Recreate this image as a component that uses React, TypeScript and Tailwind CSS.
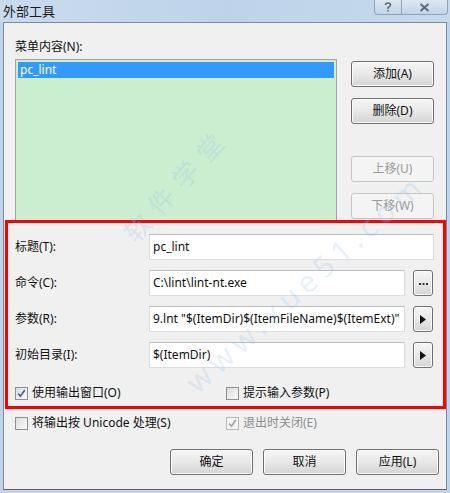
import React from "react";

const font = { fontFamily: '"Noto Sans", "Noto Sans CJK SC", sans-serif' };

function Btn({ label, disabled, className = "" }: { label: string; disabled?: boolean; className?: string }) {
  return (
    <div
      className={
        "flex h-[26px] w-[83px] items-center justify-center rounded-[3px] border text-[12px] " +
        (disabled
          ? "border-[#c3c6c9] bg-[#f4f4f4] text-[#9a9a9a]"
          : "border-[#707070] bg-gradient-to-b from-[#f6f6f6] via-[#e8e8e8] to-[#d4d4d4] text-[#111] shadow-[inset_0_0_0_1px_#fbfbfb]") +
        " " +
        className
      }
    >
      {label}
    </div>
  );
}

function SmallBtn({ children }: { children: React.ReactNode }) {
  return (
    <div className="ml-[8px] flex h-[26px] w-[20px] items-center justify-center rounded-[3px] border border-[#707070] bg-gradient-to-b from-[#f6f6f6] via-[#e8e8e8] to-[#d4d4d4] shadow-[inset_0_0_0_1px_#fbfbfb]">
      {children}
    </div>
  );
}

function Field({ label, value, btn }: { label: string; value: string; btn?: "dots" | "arrow" }) {
  return (
    <div className="flex h-[26px] items-center">
      <div className="w-[134px] text-[12px] text-[#111]">{label}</div>
      <div
        className={
          "flex h-[26px] items-center overflow-hidden whitespace-nowrap border border-[#dadcdf] border-t-[#b9bcc1] bg-white pl-[3px] text-[12px] text-[#111] " +
          (btn ? "w-[256px]" : "w-[285px]")
        }
      >
        {value}
      </div>
      {btn === "dots" && (
        <SmallBtn>
          <svg width="9" height="6" viewBox="0 0 9 6">
            <rect x="0" y="3" width="2" height="2" fill="#333" />
            <rect x="3.5" y="3" width="2" height="2" fill="#333" />
            <rect x="7" y="3" width="2" height="2" fill="#333" />
          </svg>
        </SmallBtn>
      )}
      {btn === "arrow" && (
        <SmallBtn>
          <svg width="6" height="9" viewBox="0 0 6 9">
            <path d="M0 0 L6 4.5 L0 9 Z" fill="#111" />
          </svg>
        </SmallBtn>
      )}
    </div>
  );
}

function Check({ label, checked, disabled }: { label: string; checked?: boolean; disabled?: boolean }) {
  return (
    <div className={"flex h-[16px] items-center text-[12px] " + (disabled ? "text-[#8d8d8d]" : "text-[#111]")}>
      <div
        className={
          "mr-[4px] flex h-[13px] w-[13px] items-center justify-center border " +
          (disabled ? "border-[#b8b8b8] bg-[#f4f4f4]" : "border-[#8e8f8f] bg-gradient-to-br from-[#dcdcdc] to-[#fbfbfb]")
        }
      >
        {checked && (
          <svg width="9" height="9" viewBox="0 0 9 9">
            <path d="M1.2 4.6 L3.5 7.2 L7.8 1" fill="none" stroke={disabled ? "#a5a5a5" : "#4b5e91"} strokeWidth="1.6" />
          </svg>
        )}
      </div>
      {label}
    </div>
  );
}

export default function App() {
  return (
    <div className="relative h-[493px] w-[450px] overflow-hidden bg-[#bfd4ea]" style={font}>
      {/* TITLE BAR */}
      <div className="flex h-[22px] items-start justify-between bg-gradient-to-r from-[#c9dbee] via-[#bed3ea] to-[#c6d9ed]">
        <div className="pl-[3px] pt-[2px] text-[13px] text-[#1b1b1b]">外部工具</div>
        <div className="mr-[2px] flex h-[15px] overflow-hidden rounded-b-[4px] border border-t-0 border-[#8ea2b9] bg-gradient-to-b from-[#dce7f3] to-[#c4d5e8]">
          <div className="flex w-[27px] items-center justify-center border-r border-[#8ea2b9]">
            <svg width="8" height="10" viewBox="0 0 8 10">
              <path d="M1.5 3 Q1.5 1 4 1 Q6.5 1 6.5 3 Q6.5 4.5 4 5.5 L4 7" fill="none" stroke="#5d6b7c" strokeWidth="1.6" />
              <rect x="3.2" y="8" width="1.6" height="1.6" fill="#5d6b7c" />
            </svg>
          </div>
          <div className="flex w-[45px] items-center justify-center">
            <svg width="11" height="9" viewBox="0 0 11 9">
              <path d="M1.5 1 L9.5 8 M9.5 1 L1.5 8" stroke="#5d6b7c" strokeWidth="2" />
            </svg>
          </div>
        </div>
      </div>

      {/* CLIENT */}
      <div className="mx-[3px] flex h-[468px] flex-col border border-[#7d8a99] border-b-[#5c6166] bg-[#f0f0f0]">
        <div className="ml-[11px] mt-[16px] h-[16px] text-[12px] leading-[16px] text-[#111]">菜单内容(N):</div>
        <div className="ml-[11px] mt-[4px] flex">
          <div className="h-[162px] w-[322px] border border-[#a0a0a0] bg-[#cbedd0] p-[2px]">
            <div className="flex h-[16px] items-center bg-[#3399ff] pl-[2px] text-[12px] text-white">pc_lint</div>
          </div>
          <div className="ml-[14px] flex flex-col pt-[2px]">
            <Btn label="添加(A)" />
            <Btn label="删除(D)" className="mt-[11px]" />
            <Btn label="上移(U)" disabled className="mt-[32px]" />
            <Btn label="下移(W)" disabled className="mt-[11px]" />
          </div>
        </div>

        {/* HIGHLIGHTED FIELDS */}
        <div className="-mt-[1px] ml-[1px] flex flex-col gap-[10px] border-[3px] border-[#ff0000] pb-[5px] pl-[7px] pt-[11px]">
          <Field label="标题(T):" value="pc_lint" />
          <Field label="命令(C):" value="C:\lint\lint-nt.exe" btn="dots" />
          <Field label="参数(R):" value={'9.lnt "$(ItemDir)$(ItemFileName)$(ItemExt)"'} btn="arrow" />
          <Field label="初始目录(I):" value="$(ItemDir)" btn="arrow" />
          <div className="mt-[7px] grid grid-cols-[211px_1fr]">
            <Check label="使用输出窗口(O)" checked />
            <Check label="提示输入参数(P)" />
          </div>
        </div>

        <div className="ml-[11px] mt-[6px] grid grid-cols-[211px_1fr]">
          <Check label="将输出按 Unicode 处理(S)" />
          <Check label="退出时关闭(E)" checked disabled />
        </div>

        <div className="mr-[7px] mt-[18px] flex justify-end gap-[10px]">
          <Btn label="确定" className="h-[25px]" />
          <Btn label="取消" className="h-[25px]" />
          <Btn label="应用(L)" className="h-[25px]" />
        </div>
      </div>

      {/* WATERMARK */}
      <div className="pointer-events-none absolute left-[105px] top-[165px] -rotate-[48deg] text-[26px] tracking-[10px] text-[#9cc6e6]/30">
        软件学堂
      </div>
      <div className="pointer-events-none absolute left-[150px] top-[260px] -rotate-[42deg] text-[30px] tracking-[6px] text-[#9cc6e6]/25">
        www.xue51.com
      </div>
    </div>
  );
}
